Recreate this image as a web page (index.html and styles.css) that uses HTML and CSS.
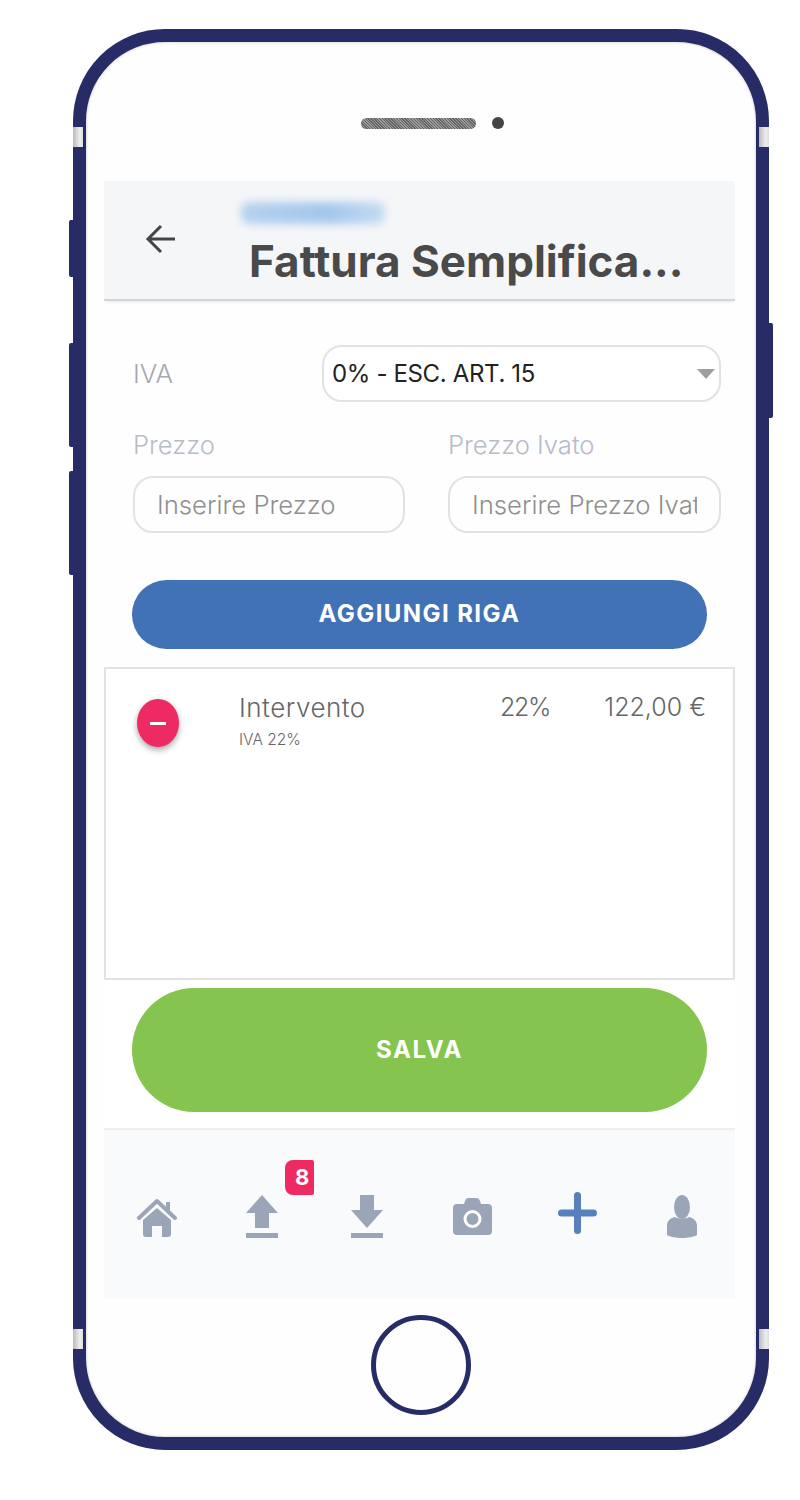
FILE: index.html
```html
<!DOCTYPE html>
<html lang="it">
<head>
  <meta charset="UTF-8">
  <title>Fattura Semplificata</title>
  <link rel="stylesheet" href="styles.css">
</head>
<body>

  <div class="phone">
    <span class="side-key key-1"></span>
    <span class="side-key key-2"></span>
    <span class="side-key key-3"></span>
    <span class="side-key key-4"></span>
    <span class="band band-tl"></span>
    <span class="band band-tr"></span>
    <span class="band band-bl"></span>
    <span class="band band-br"></span>

    <div class="earpiece">
      <span class="speaker"></span>
      <span class="camera-dot"></span>
    </div>

    <div class="screen">
      <header class="topbar">
        <svg class="back" width="32" height="32" viewBox="0 0 32 32">
          <path d="M30 16H4M16 3L3 16l13 13" fill="none" stroke="#444" stroke-width="3"/>
        </svg>
        <div class="topbar-text">
          <div class="smudge"></div>
          <h1>Fattura Semplifica...</h1>
        </div>
      </header>

      <div class="form">
        <div class="iva-row">
          <label class="lbl">IVA</label>
          <div class="select">0% - ESC. ART. 15<span class="caret"></span></div>
        </div>
        <div class="price-row">
          <div>
            <label class="lbl small">Prezzo</label>
            <div class="input"><span>Inserire Prezzo</span></div>
          </div>
          <div>
            <label class="lbl small">Prezzo Ivato</label>
            <div class="input"><span>Inserire Prezzo Ivato</span></div>
          </div>
        </div>
        <button class="btn add">AGGIUNGI RIGA</button>
      </div>

      <div class="list">
        <div class="line">
          <span class="remove"><i></i></span>
          <div class="line-name">
            Intervento
            <small>IVA 22%</small>
          </div>
          <div class="line-vat">22%</div>
          <div class="line-price">122,00 €</div>
        </div>
      </div>

      <div class="save-wrap">
        <button class="btn save">SALVA</button>
      </div>

      <nav class="tabs">
        <a class="tab">
          <svg width="40" height="40" viewBox="0 0 40 40">
            <path d="M2 21L20 4l18 17" fill="none" stroke="#9aa5b8" stroke-width="4" stroke-linecap="round" stroke-linejoin="round"/>
            <path d="M29 5h4v10h-4zM20 11l14 12v14a3 3 0 0 1-3 3h-6V29h-10v11H9a3 3 0 0 1-3-3V23z" fill="#9aa5b8"/>
          </svg>
        </a>
        <a class="tab">
          <span class="badge">8</span>
          <svg class="up" width="32" height="43" viewBox="0 0 32 43">
            <path d="M16 0l16 18h-9v15H9V18H0z" fill="#9aa5b8"/>
            <rect y="38" width="32" height="5" fill="#9aa5b8"/>
          </svg>
        </a>
        <a class="tab">
          <svg class="up" width="32" height="43" viewBox="0 0 32 43">
            <path d="M9 0h14v15h9L16 33 0 15h9z" fill="#9aa5b8"/>
            <rect y="38" width="32" height="5" fill="#9aa5b8"/>
          </svg>
        </a>
        <a class="tab">
          <svg class="cam" width="39" height="37" viewBox="0 0 39 37">
            <path d="M4 6h7l1-3a4 4 0 0 1 3-3h9a4 4 0 0 1 3 3l1 3h7a4 4 0 0 1 4 4v23a4 4 0 0 1-4 4H4a4 4 0 0 1-4-4V10a4 4 0 0 1 4-4z" fill="#9aa5b8"/>
            <circle cx="19.500" cy="21" r="7.500" fill="none" stroke="#fff" stroke-width="3"/>
          </svg>
        </a>
        <a class="tab">
          <svg class="plus" width="39" height="42" viewBox="0 0 39 42">
            <path d="M19.500 3.500v35M3.500 21h32" fill="none" stroke="#5880bd" stroke-width="7" stroke-linecap="round"/>
          </svg>
        </a>
        <a class="tab">
          <svg class="up" width="30" height="43" viewBox="0 0 30 43">
            <ellipse cx="15" cy="12" rx="8" ry="12" fill="#9aa5b8"/>
            <path d="M8 22c3 2 11 2 14 0 5 1 8 4 8 9v9c-6 4-24 4-30 0v-9c0-5 3-8 8-9z" fill="#9aa5b8"/>
          </svg>
        </a>
      </nav>
    </div>

    <div class="home-key"></div>
  </div>

</body>
</html>
```
FILE: styles.css
```css
body {
  margin: 0;
  background: #fff;
  font-family: 'Inter', 'Open Sans', sans-serif;
  color: #000;
}

.phone {
  position: relative;
  box-sizing: border-box;
  width: 696px;
  height: 1421px;
  margin: 29px 0 0 73px;
  border: 13px solid #272c66;
  border-radius: 92px;
  background: #fefefe;
  box-shadow: inset 0 0 3px rgba(0,0,0,0.25);
}

.side-key {
  position: absolute;
  width: 4px;
  background: #272c66;
}

.key-1 { left: -17px; top: 178px; height: 57px; border-radius: 2px 0 0 2px; }
.key-2 { left: -17px; top: 301px; height: 104px; border-radius: 2px 0 0 2px; }
.key-3 { left: -17px; top: 429px; height: 104px; border-radius: 2px 0 0 2px; }
.key-4 { right: -17px; top: 281px; height: 95px; border-radius: 0 2px 2px 0; }

.band {
  position: absolute;
  width: 10px;
  height: 20px;
  background: linear-gradient(90deg, #bbb, #eee 70%, #ddd);
}

.band-tl { left: -13px; top: 85px; }
.band-bl { left: -13px; top: 1287px; }
.band-tr { right: -13px; top: 85px; }
.band-br { right: -13px; top: 1287px; }

.earpiece {
  display: flex;
  align-items: center;
  gap: 16px;
  height: 139px;
  box-sizing: border-box;
  padding: 23px 0 0 275px;
}

.speaker {
  width: 115px;
  height: 11px;
  border-radius: 6px;
  background: repeating-linear-gradient(45deg, #666 0 1px, #999 1px 2px);
}

.camera-dot {
  width: 12px;
  height: 12px;
  border-radius: 50%;
  background: #444;
}

.screen {
  width: 631px;
  margin-left: 18px;
}

.topbar {
  display: flex;
  height: 118px;
  background: #f5f6f8;
  border-bottom: 2px solid #d4d6d8;
  box-shadow: 0 3px 3px -2px rgba(0,0,0,0.1);
}

.back {
  margin: 42px 0 0 41px;
}

.topbar-text {
  padding-left: 72px;
}

.smudge {
  width: 144px;
  height: 22px;
  margin: 21px 0 0 -8px;
  border-radius: 8px;
  background: linear-gradient(90deg, #b5d2ef, #a3c7ea 60%, #c4dbf2);
  filter: blur(4px);
}

.topbar-text h1 {
  margin: 12px 0 0;
  font-size: 44px;
  font-weight: 700;
  line-height: 50px;
  color: #4a4a4a;
  white-space: nowrap;
}

.form {
  padding: 44px 14px 0 29px;
}

.iva-row {
  display: flex;
  align-items: center;
  justify-content: space-between;
}

.lbl {
  font-size: 26px;
  font-weight: 300;
  color: #a6a9ae;
}

.lbl.small {
  display: block;
  margin-bottom: 16px;
  font-size: 25.600px;
  line-height: 30px;
  color: #b6bcc8;
}

.select {
  position: relative;
  box-sizing: border-box;
  width: 399px;
  height: 57px;
  padding-left: 8px;
  border: 2px solid #e2e2e2;
  border-radius: 20px;
  background: #fff;
  font-size: 24px;
  font-weight: 400;
  letter-spacing: -0.35px;
  line-height: 53px;
  color: #222;
}

.caret {
  position: absolute;
  right: 4px;
  top: 22px;
  border-left: 9px solid transparent;
  border-right: 9px solid transparent;
  border-top: 10px solid #9e9e9e;
}

.price-row {
  display: grid;
  grid-template-columns: 272px 273px;
  justify-content: space-between;
  margin-top: 28px;
}

.input {
  box-sizing: border-box;
  height: 57px;
  padding: 0 22px 0 22px;
  border: 2px solid #e2e2e2;
  border-radius: 20px;
  font-size: 25.700px;
  font-weight: 300;
  line-height: 53px;
  color: #8f8f8f;
}

.input span {
  display: block;
  overflow: hidden;
  white-space: nowrap;
}

.btn {
  display: block;
  width: 575px;
  margin-left: -1px;
  border: 0;
  color: #fff;
  font-family: inherit;
  font-weight: 700;
  font-size: 24px;
}

.add {
  height: 69px;
  margin-top: 47px;
  padding-bottom: 3px;
  border-radius: 35px;
  background: #4172b6;
  letter-spacing: 1.400px;
}

.list {
  height: 309px;
  margin-top: 18px;
  border: 2px solid #e2e2e2;
  border-radius: 1px;
  background: #fff;
}

.line {
  display: flex;
  padding: 23px 29px 0 31px;
  color: #666;
}

.remove {
  display: flex;
  align-items: center;
  justify-content: center;
  width: 42px;
  height: 48px;
  margin-top: 7px;
  border-radius: 50%;
  background: #ee2a62;
  box-shadow: 0 3px 6px rgba(0,0,0,0.35);
}

.remove i {
  width: 16px;
  height: 3px;
  background: #fff;
}

.line-name {
  width: 261px;
  padding-left: 60px;
  font-size: 26px;
  font-weight: 300;
  letter-spacing: 0.500px;
}

.line-name small {
  display: block;
  margin-top: 7px;
  font-size: 15.500px;
  letter-spacing: 0;
}

.line-vat {
  font-size: 25px;
  font-weight: 300;
  letter-spacing: -1.300px;
}

.line-price {
  margin-left: auto;
  margin-right: -2px;
  font-size: 25px;
  font-weight: 300;
}

.save-wrap {
  padding: 8px 0 16px 28px;
  background: #fff;
}

.save {
  height: 124px;
  margin-left: 0;
  padding-bottom: 2px;
  border-radius: 62px;
  background: #84c44f;
  letter-spacing: 1.600px;
}

.tabs {
  display: grid;
  grid-template-columns: repeat(6, 1fr);
  height: 169px;
  border-top: 2px solid #eceef0;
  background: #f9fafc;
}

.tab {
  position: relative;
  display: flex;
  justify-content: center;
  padding-top: 67px;
}

.tab .up {
  margin-top: -2px;
}

.tab .cam {
  margin-top: 1px;
}

.tab .plus {
  margin-top: -5px;
}

.badge {
  position: absolute;
  left: 76px;
  top: 30px;
  box-sizing: border-box;
  width: 29px;
  height: 35px;
  padding-left: 5px;
  border-radius: 8px 2px 2px 8px;
  background: #ee2a62;
  color: #fff;
  font-size: 22px;
  font-weight: 700;
  line-height: 35px;
  text-align: center;
}

.home-key {
  box-sizing: border-box;
  width: 100px;
  height: 100px;
  margin: 16px 0 0 285px;
  border: 5px solid #272c66;
  border-radius: 50%;
}
```
